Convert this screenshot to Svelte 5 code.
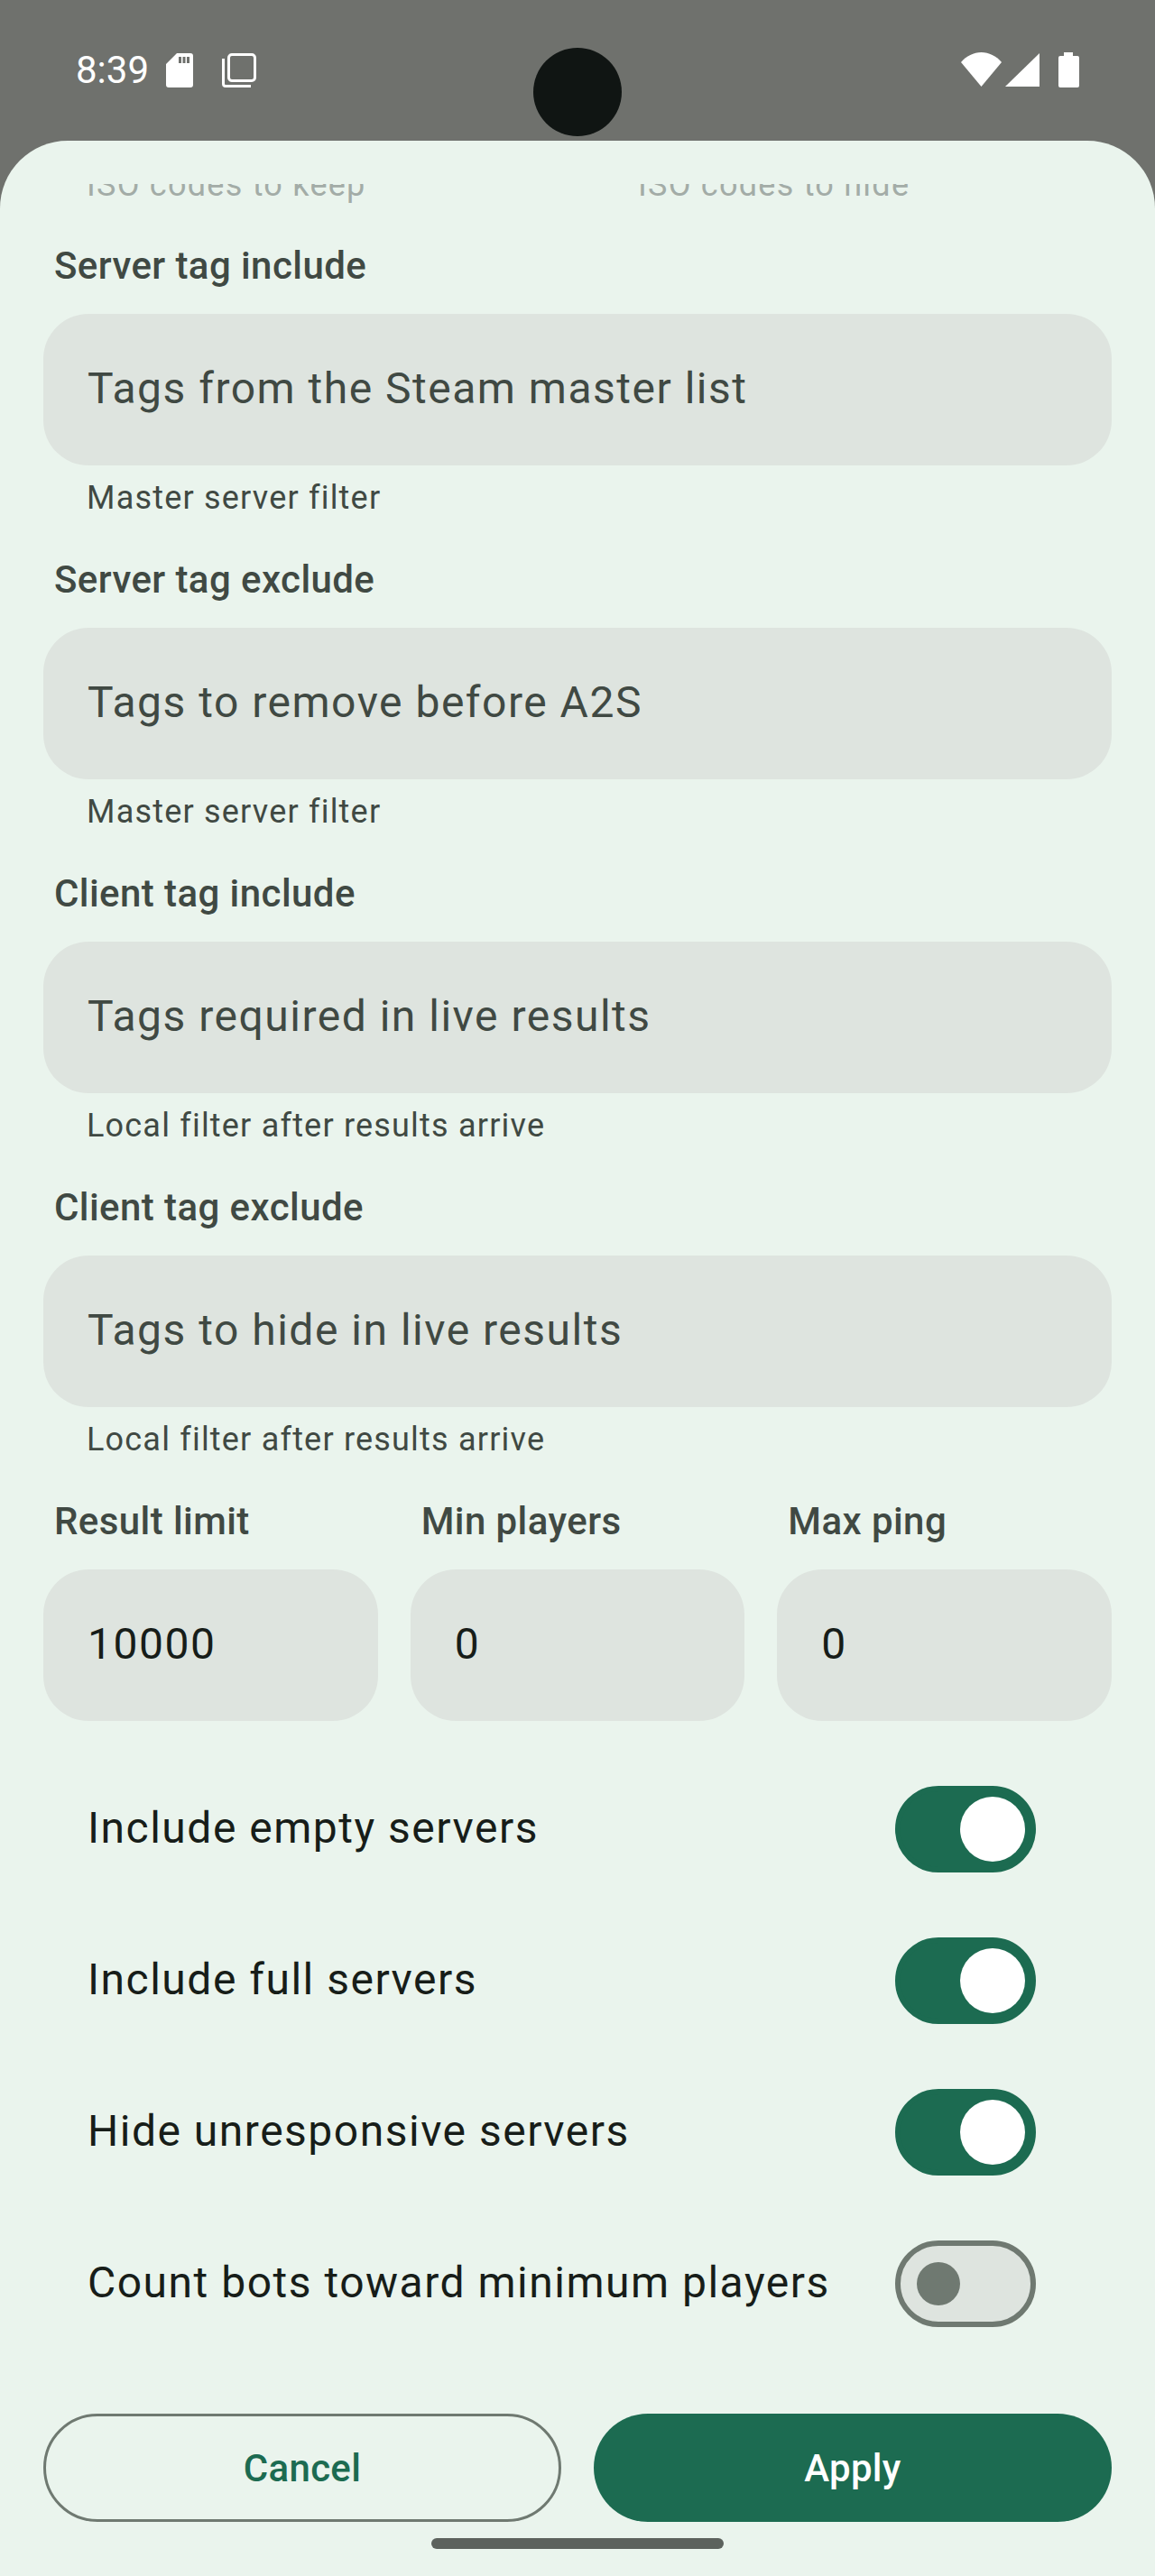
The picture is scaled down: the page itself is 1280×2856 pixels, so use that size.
<script>
  const tagFields = [
    { label: 'Server tag include', placeholder: 'Tags from the Steam master list', help: 'Master server filter' },
    { label: 'Server tag exclude', placeholder: 'Tags to remove before A2S', help: 'Master server filter' },
    { label: 'Client tag include', placeholder: 'Tags required in live results', help: 'Local filter after results arrive' },
    { label: 'Client tag exclude', placeholder: 'Tags to hide in live results', help: 'Local filter after results arrive' },
  ];
  const numbers = [
    { label: 'Result limit', value: '10000' },
    { label: 'Min players', value: '0' },
    { label: 'Max ping', value: '0' },
  ];
  const toggles = [
    { label: 'Include empty servers', on: true },
    { label: 'Include full servers', on: true },
    { label: 'Hide unresponsive servers', on: true },
    { label: 'Count bots toward minimum players', on: false },
  ];
</script>

<div class="screen">
  <header class="status">
    <div class="status-left">
      <span class="time">8:39</span>
      <svg class="sd" viewBox="0 0 30 38" aria-hidden="true">
        <path fill-rule="evenodd" fill="#fff" d="M12 0h15a3 3 0 0 1 3 3v32a3 3 0 0 1-3 3H3a3 3 0 0 1-3-3V12zM14 4v7h3V4zM18.500 4v7h3V4zM23 4v7h3V4z" />
      </svg>
      <svg class="copies" viewBox="0 0 38 38" aria-hidden="true">
        <path fill="none" stroke="#fff" stroke-width="3" d="M11 1.500h22a3.500 3.500 0 0 1 3.500 3.500v22a3.500 3.500 0 0 1-3.500 3.500H11a3.500 3.500 0 0 1-3.500-3.500V5A3.500 3.500 0 0 1 11 1.500z" />
        <path fill="none" stroke="#fff" stroke-width="3" d="M1.500 6v28a2.500 2.500 0 0 0 2.500 2.500h28" />
      </svg>
    </div>
    <div class="camera"></div>
    <div class="status-right">
      <svg class="wifi" viewBox="0 0 45 38" aria-hidden="true">
        <path fill="#fff" d="M0 11C6 4 14 0 22.500 0S39 4 45 11L22.500 38z" />
      </svg>
      <svg class="signal" viewBox="0 0 38 37" aria-hidden="true">
        <path fill="#fff" d="M38 0v37H0z" />
      </svg>
      <svg class="battery" viewBox="0 0 23 39" aria-hidden="true">
        <path fill="#fff" d="M6 0h10v4h5a2 2 0 0 1 2 2v31a2 2 0 0 1-2 2H2a2 2 0 0 1-2-2V6a2 2 0 0 1 2-2h4z" />
      </svg>
    </div>
  </header>

  <main class="sheet">
    <div class="scroll">
      <div class="clipped">
        <span>ISO codes to keep</span>
        <span>ISO codes to hide</span>
      </div>

      {#each tagFields as field}
        <section class="field">
          <h3>{field.label}</h3>
          <div class="box">{field.placeholder}</div>
          <p>{field.help}</p>
        </section>
      {/each}

      <div class="numbers">
        {#each numbers as item}
          <section class="number">
            <h3>{item.label}</h3>
            <div class="box value">{item.value}</div>
          </section>
        {/each}
      </div>

      <div class="toggles">
        {#each toggles as toggle}
          <div class="toggle-row">
            <span>{toggle.label}</span>
            <div class="switch" class:on={toggle.on}><i></i></div>
          </div>
        {/each}
      </div>
    </div>

    <footer class="actions">
      <button class="cancel">Cancel</button>
      <button class="apply">Apply</button>
    </footer>
    <div class="handle"></div>
  </main>
</div>

<style>
  :global(body) {
    margin: 0;
  }

  .screen {
    width: 1280px;
    height: 2856px;
    background: #6f716d;
    font-family: Roboto, sans-serif;
    overflow: hidden;
    display: flex;
    flex-direction: column;
  }

  .status {
    position: relative;
    height: 156px;
    flex: none;
    display: flex;
    justify-content: space-between;
    padding: 58px 84px 0 84px;
    box-sizing: border-box;
  }

  .status-left,
  .status-right {
    display: flex;
    align-items: flex-start;
    height: 40px;
  }

  .time {
    color: #fff;
    font-size: 42px;
    line-height: 40px;
    width: 80px;
  }

  .sd {
    width: 30px;
    height: 38px;
    margin: 1px 0 0 20px;
  }

  .copies {
    width: 38px;
    height: 38px;
    margin: 1px 0 0 32px;
  }

  .wifi {
    width: 45px;
    height: 38px;
  }

  .signal {
    width: 38px;
    height: 37px;
    margin: 1px 0 0 4px;
  }

  .battery {
    width: 23px;
    height: 39px;
    margin-left: 21px;
  }

  .camera {
    position: absolute;
    left: 591px;
    top: 53px;
    width: 98px;
    height: 98px;
    border-radius: 50%;
    background: #101513;
  }

  .sheet {
    flex: 1;
    background: #eaf4ed;
    border-radius: 75px 75px 0 0;
    display: flex;
    flex-direction: column;
    align-items: stretch;
  }

  .scroll {
    height: 2436px;
    margin-top: 48px;
    overflow: hidden;
    padding: 0 48px;
    flex: none;
  }

  .clipped {
    height: 24px;
    display: grid;
    grid-template-columns: 611px 1fr;
    padding-left: 48px;
    font-size: 36px;
    letter-spacing: 1.25px;
    color: #a3aca7;
    overflow: hidden;
  }

  .clipped span {
    display: block;
    line-height: 48px;
    margin-top: -23px;
    white-space: nowrap;
  }

  h3 {
    margin: 0;
    font-size: 42px;
    line-height: 60px;
    height: 60px;
    padding: 1px 0 0 12px;
    box-sizing: border-box;
    font-weight: 500;
    letter-spacing: 0.42px;
    color: #404943;
  }

  .field {
    margin-top: 36px;
    height: 312px;
  }

  .box {
    height: 168px;
    margin-top: 24px;
    border-radius: 50px;
    background: #dee4df;
    color: #404943;
    font-size: 48px;
    letter-spacing: 1.5px;
    padding: 0 48px 3px 49px;
    box-sizing: border-box;
    display: flex;
    align-items: center;
  }

  .field p {
    margin: 12px 0 0 48px;
    font-size: 36px;
    line-height: 48px;
    letter-spacing: 1.2px;
    color: #404943;
  }

  .numbers {
    display: grid;
    grid-template-columns: repeat(3, 1fr);
    gap: 36px;
    margin-top: 36px;
  }

  .box.value {
    color: #171d19;
  }

  .toggles {
    margin-top: 36px;
    padding-left: 48px;
  }

  .toggle-row {
    height: 168px;
    display: flex;
    align-items: center;
    justify-content: space-between;
    padding-right: 84px;
    color: #171d19;
    font-size: 48px;
    letter-spacing: 1.5px;
  }

  .toggle-row span {
    margin: 0 0 3px 1px;
  }

  .switch {
    width: 156px;
    height: 96px;
    border-radius: 48px;
    border: 6px solid #6f7971;
    background: #dee4df;
    box-sizing: border-box;
    display: flex;
    align-items: center;
    padding-left: 18px;
  }

  .switch i {
    width: 48px;
    height: 48px;
    border-radius: 50%;
    background: #6f7971;
  }

  .switch.on {
    background: #1c6b51;
    border-color: #1c6b51;
    padding-left: 66px;
  }

  .switch.on i {
    width: 72px;
    height: 72px;
    background: #fff;
  }

  .actions {
    display: grid;
    grid-template-columns: 1fr 1fr;
    gap: 36px;
    padding: 0 48px;
    margin-top: 36px;
  }

  button {
    height: 120px;
    border-radius: 60px;
    font: 500 42px Roboto, sans-serif;
    letter-spacing: 0.3px;
  }

  .cancel {
    background: transparent;
    border: 3px solid #6f7971;
    color: #1c6b51;
  }

  .apply {
    background: #1c6b51;
    border: none;
    color: #fff;
  }

  .handle {
    width: 324px;
    height: 12px;
    border-radius: 6px;
    background: #5c625d;
    margin: 18px auto 0;
  }
</style>
